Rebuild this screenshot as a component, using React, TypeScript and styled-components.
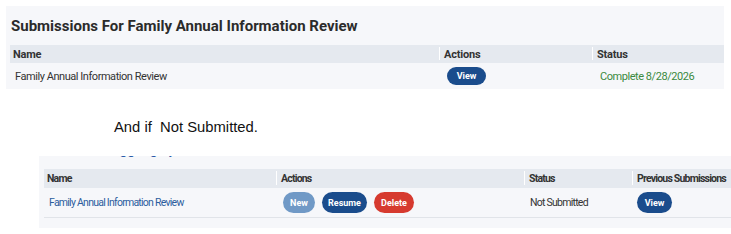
import React from "react";
import styled, { createGlobalStyle } from "styled-components";

const GlobalStyle = createGlobalStyle`
  body {
    margin: 0;
    background: #ffffff;
    font-family: Roboto, "Liberation Sans", sans-serif;
  }
`;

const Page = styled.div`
  display: flex;
  flex-direction: column;
  width: 731px;
  height: 234px;
  overflow: hidden;
`;

const Panel = styled.section<{ $left: number; $width: number }>`
  margin-left: ${(p) => p.$left}px;
  width: ${(p) => p.$width}px;
  background: #f6f7fa;
  flex-shrink: 0;
  box-sizing: border-box;
`;

const TopPanel = styled(Panel)`
  margin-top: 6px;
  padding-left: 4px;
`;

const BottomPanel = styled(Panel)`
  margin-top: 21px;
  padding: 0 0 10px 5px;
`;

const Title = styled.h2`
  margin: 0;
  height: 39px;
  display: flex;
  align-items: center;
  padding-left: 1px;
  padding-top: 1px;
  box-sizing: border-box;
  font-size: 15px;
  font-weight: 700;
  color: #2b2b2b;
`;

const Clipped = styled.div`
  height: 13px;
  overflow: hidden;
`;

const ClippedText = styled.span`
  display: block;
  margin-top: -15px;
  margin-left: 60px;
  font-size: 14px;
  line-height: 17px;
  color: #2a5aa8;
`;

/* the lower table is a squeezed screenshot, so its type is tighter */
const Grid = styled.div<{ $cols: string; $tight?: boolean }>`
  display: grid;
  grid-template-columns: ${(p) => p.$cols};
  --head-size: ${(p) => (p.$tight ? "10.5px" : "11px")};
  --head-spacing: ${(p) => (p.$tight ? "-0.8px" : "-0.2px")};
  --cell-size: ${(p) => (p.$tight ? "10.5px" : "11px")};
  --cell-spacing: ${(p) => (p.$tight ? "-0.75px" : "-0.45px")};
`;

const HeadCell = styled.div<{ $h: number }>`
  height: ${(p) => p.$h}px;
  background: #e5e9ef;
  display: flex;
  align-items: center;
  white-space: nowrap;
  font-size: var(--head-size);
  font-weight: 700;
  letter-spacing: var(--head-spacing);
  color: #333;
  padding-left: 3px;
  position: relative;

  & + & {
    padding-left: 5px;
  }
  & + &::before {
    content: "";
    position: absolute;
    left: 0;
    top: 2px;
    bottom: 3px;
    width: 1px;
    background: #ffffff;
  }
`;

const Cell = styled.div<{ $h: number; $color?: string; $border?: boolean; $pad?: number }>`
  height: ${(p) => p.$h}px;
  display: flex;
  align-items: center;
  gap: 7px;
  white-space: nowrap;
  font-size: var(--cell-size);
  letter-spacing: var(--cell-spacing);
  color: ${(p) => p.$color || "#333"};
  padding-left: ${(p) => p.$pad ?? 5}px;
  box-sizing: border-box;
  border-bottom: ${(p) => (p.$border ? "1px solid #e1e4e9" : "none")};
`;

const Pill = styled.button<{ $bg: string; $w: number; $h: number }>`
  width: ${(p) => p.$w}px;
  height: ${(p) => p.$h}px;
  border: none;
  border-radius: 11px;
  background: ${(p) => p.$bg};
  color: #ffffff;
  font-family: Roboto, "Liberation Sans", sans-serif;
  font-size: 9px;
  font-weight: 700;
  letter-spacing: 0;
  padding: 0;
  flex-shrink: 0;
  cursor: pointer;
`;

const Note = styled.p`
  margin: 30px 0 0 114px;
  font-family: "Liberation Sans", Arial, sans-serif;
  font-size: 14.8px;
  line-height: 16px;
  color: #111;
`;

const NAVY = "#1a4c8c";

export default function App() {
  return (
    <>
      <GlobalStyle />
      <Page>
        <TopPanel $left={6} $width={718}>
          <Title>Submissions For Family Annual Information Review</Title>
          <Grid $cols="429px 153px 132px">
            <HeadCell $h={18}>Name</HeadCell>
            <HeadCell $h={18}>Actions</HeadCell>
            <HeadCell $h={18}>Status</HeadCell>
            <Cell $h={26}>Family Annual Information Review</Cell>
            <Cell $h={26} $pad={8}>
              <Pill $bg={NAVY} $w={39} $h={18}>View</Pill>
            </Cell>
            <Cell $h={26} $pad={8} $color="#3b8a3e">
              Complete 8/28/2026
            </Cell>
          </Grid>
        </TopPanel>

        <Note>And if&nbsp; Not Submitted.</Note>

        <BottomPanel $left={39} $width={700}>
          <Clipped>
            <ClippedText>Juggling by</ClippedText>
          </Clipped>
          <Grid $cols="232px 248px 108px 110px" $tight>
            <HeadCell $h={19}>Name</HeadCell>
            <HeadCell $h={19}>Actions</HeadCell>
            <HeadCell $h={19}>Status</HeadCell>
            <HeadCell $h={19}>Previous Submissions</HeadCell>
            <Cell $h={30} $border $color="#2c5d9e">
              Family Annual Information Review
            </Cell>
            <Cell $h={30} $border $pad={7}>
              <Pill $bg="#7099c6" $w={32} $h={21}>New</Pill>
              <Pill $bg={NAVY} $w={45} $h={21}>Resume</Pill>
              <Pill $bg="#d63a2f" $w={40} $h={21}>Delete</Pill>
            </Cell>
            <Cell $h={30} $border $pad={6}>Not Submitted</Cell>
            <Cell $h={30} $border>
              <Pill $bg={NAVY} $w={35} $h={21}>View</Pill>
            </Cell>
          </Grid>
        </BottomPanel>
      </Page>
    </>
  );
}
